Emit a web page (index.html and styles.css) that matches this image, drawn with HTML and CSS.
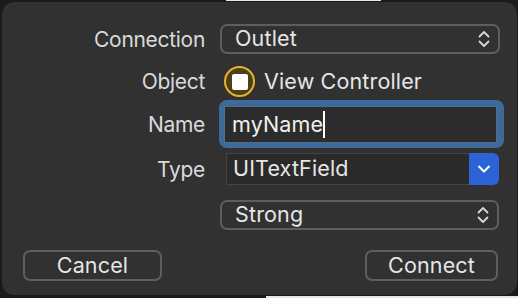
FILE: index.html
```html
<!DOCTYPE html>
<html>
<head>
<meta charset="utf-8">
<link rel="stylesheet" href="styles.css">
</head>
<body>
<div class="panel">
  <div class="row row-conn">
    <div class="label">Connection</div>
    <div class="popup">
      <span class="popup-text">Outlet</span>
      <svg class="updown" width="14" height="20" viewBox="0 0 14 20"><path d="M2.5 7.5 L7 3 L11.5 7.5 M2.5 12.5 L7 17 L11.5 12.5" fill="none" stroke="#d8d8d8" stroke-width="1.8" stroke-linecap="round" stroke-linejoin="round"/></svg>
    </div>
  </div>
  <div class="row row-obj">
    <div class="label">Object</div>
    <div class="object">
      <span class="obj-icon"><span class="obj-square"></span></span>
      <span class="obj-text">View Controller</span>
    </div>
  </div>
  <div class="row row-name">
    <div class="label">Name</div>
    <div class="field-wrap">
      <div class="field"><span class="field-text">myName</span><span class="caret"></span></div>
    </div>
  </div>
  <div class="row row-type">
    <div class="label">Type</div>
    <div class="combo">
      <span class="combo-text">UITextField</span>
      <span class="combo-btn"><svg width="14" height="10" viewBox="0 0 14 10"><path d="M2 2.5 L7 7.5 L12 2.5" fill="none" stroke="#ffffff" stroke-width="2" stroke-linecap="round" stroke-linejoin="round"/></svg></span>
    </div>
  </div>
  <div class="row row-strong">
    <div class="label"></div>
    <div class="popup popup-strong">
      <span class="popup-text">Strong</span>
      <svg class="updown" width="14" height="20" viewBox="0 0 14 20"><path d="M2.5 7.5 L7 3 L11.5 7.5 M2.5 12.5 L7 17 L11.5 12.5" fill="none" stroke="#d8d8d8" stroke-width="1.8" stroke-linecap="round" stroke-linejoin="round"/></svg>
    </div>
  </div>
  <div class="buttons">
    <div class="btn btn-cancel">Cancel</div>
    <div class="btn btn-connect">Connect</div>
  </div>
</div>
</body>
</html>
```
FILE: styles.css
```css
html, body {
  margin: 0;
  padding: 0;
}
body {
  width: 518px;
  height: 298px;
  background:
    linear-gradient(#e6e6e6, #e6e6e6) 226px 0 / 155px 1px no-repeat,
    linear-gradient(#e6e6e6, #e6e6e6) 266px 296px / 252px 2px no-repeat,
    #1b1b1b;
  font-family: "Inter", "Liberation Sans", sans-serif;
  overflow: hidden;
}
.panel {
  box-sizing: border-box;
  margin: 1px 0 0 1px;
  width: 517px;
  height: 295px;
  background: #313131;
  border: 1px solid #1a1a1a;
  border-radius: 13px;
  padding: 22px 17px 0 0;
  display: flex;
  flex-direction: column;
  color: #e4e4e4;
  font-size: 21.5px;
  letter-spacing: 0.15px;
  line-height: 1;
}
.row {
  display: grid;
  grid-template-columns: 203px 1fr;
  column-gap: 15px;
  align-items: center;
}
.label {
  text-align: right;
  color: #dadada;
  font-size: 21px;
  letter-spacing: -0.3px;
}
.row-conn { height: 30px; }
.row-obj { height: 31px; margin-top: 12px; }
.row-name { height: 48px; margin-top: 3px; }
.row-type { height: 32px; margin-top: 5px; }
.row-strong { height: 30px; margin-top: 15px; }

.popup {
  box-sizing: border-box;
  height: 30px;
  border: 2px solid #5e5e5e;
  border-radius: 7px;
  display: flex;
  align-items: center;
  justify-content: space-between;
  padding: 0 7px 0 13px;
}
.popup-strong { margin-right: 1px; }
.popup-text { color: #e6e6e6; }
.updown { display: block; }

.object {
  display: flex;
  align-items: center;
  margin-left: 4px;
}
.obj-icon {
  box-sizing: border-box;
  width: 31px;
  height: 31px;
  border-radius: 50%;
  border: 2px solid #e9b22e;
  background: #4b4114;
  display: flex;
  align-items: center;
  justify-content: center;
}
.obj-square {
  width: 16px;
  height: 16px;
  background: #ffffff;
  border-radius: 2px;
}
.obj-text {
  margin-left: 9px;
  color: #e6e6e6;
}

.field-wrap {
  box-sizing: border-box;
  height: 48px;
  margin-left: -1px;
  margin-right: -4px;
  border-radius: 8px;
  background: #3d6a98;
  padding: 6px 7px 5px 5px;
}
.field {
  box-sizing: border-box;
  height: 100%;
  background: #2c2c2c;
  border: 1px solid #4d6f8f;
  display: flex;
  align-items: center;
  padding-left: 7px;
}
.field-text { color: #f0f0f0; }
.caret {
  display: inline-block;
  width: 2px;
  height: 27px;
  background: #ffffff;
  margin-left: 0;
}

.combo {
  box-sizing: border-box;
  height: 32px;
  margin-left: 6px;
  margin-right: 1px;
  display: flex;
  align-items: stretch;
  border-radius: 0 6px 6px 0;
}
.combo-text {
  flex: 1;
  box-sizing: border-box;
  background: #2a2a2a;
  border: 1px solid #444444;
  border-right: none;
  display: flex;
  align-items: center;
  padding-left: 6px;
  color: #e6e6e6;
}
.combo-btn {
  width: 30px;
  background: #2c63d6;
  border-radius: 0 6px 6px 0;
  display: flex;
  align-items: center;
  justify-content: center;
}
.combo-btn svg { display: block; }

.buttons {
  display: flex;
  justify-content: space-between;
  margin-top: 20px;
  padding-left: 21px;
  margin-right: 2px;
}
.btn {
  box-sizing: border-box;
  height: 31px;
  border: 2px solid #5e5e5e;
  border-radius: 7px;
  display: flex;
  align-items: center;
  justify-content: center;
  color: #e6e6e6;
}
.btn-cancel { width: 139px; }
.btn-connect { width: 133px; }
```
